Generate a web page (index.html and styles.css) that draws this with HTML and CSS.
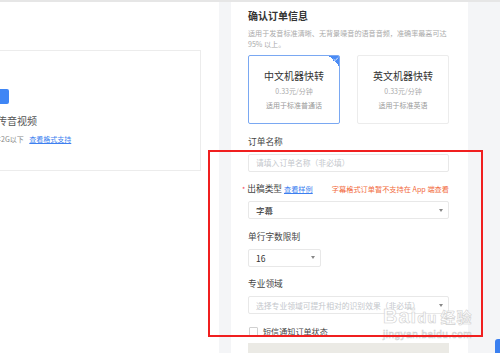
FILE: index.html
```html
<!DOCTYPE html>
<html lang="zh-CN">
<head>
    <meta charset="UTF-8">
    <meta name="viewport" content="width=device-width, initial-scale=1.0">
    <title>确认订单信息</title>
    <link rel="stylesheet" href="styles.css">
</head>
<body>
    <div class="page">
        <div class="left">
            <div class="upload-card">
                <div class="upload-btn"></div>
                <div class="upload-title">上传音视频</div>
                <div class="upload-tip">文件2G以下 <a href="#" class="link">查看格式支持</a></div>
            </div>
        </div>
        <div class="right">
            <h2 class="title">确认订单信息</h2>
            <p class="desc">适用于发音标准清晰、无背景噪音的语音音频，准确率最高可达<br>95% 以上。</p>
            <div class="cards">
                <div class="card active">
                    <span class="corner">
                        <svg viewBox="0 0 10 10" width="10" height="10"><path d="M4.6 3.2 L6.2 4.6 L9 1.6" fill="none" stroke="#fff" stroke-width="0.8"/></svg>
                    </span>
                    <div class="card-name">中文机器快转</div>
                    <div class="card-price">0.33元/分钟</div>
                    <div class="card-note">适用于标准普通话</div>
                </div>
                <div class="card">
                    <div class="card-name">英文机器快转</div>
                    <div class="card-price">0.33元/分钟</div>
                    <div class="card-note">适用于标准英语</div>
                </div>
            </div>

            <div class="field">
                <div class="label">订单名称</div>
                <div class="control"><span class="placeholder">请填入订单名称（非必填）</span></div>
            </div>
            <div class="field">
                <div class="label-row">
                    <div class="label"><span class="star">*</span>出稿类型 <a href="#" class="link">查看样例</a></div>
                    <div class="note">字幕格式订单暂不支持在 App 端查看</div>
                </div>
                <div class="control select"><span class="value">字幕</span><span class="arrow"></span></div>
            </div>
            <div class="field">
                <div class="label">单行字数限制</div>
                <div class="control select small"><span class="value">16</span><span class="arrow"></span></div>
            </div>
            <div class="field">
                <div class="label">专业领域</div>
                <div class="control select"><span class="placeholder">选择专业领域可提升相对的识别效果（非必填）</span><span class="arrow"></span></div>
            </div>
            <label class="check-row"><span class="checkbox"></span>短信通知订单状态</label>
            <div class="submit-box"></div>
        </div>
    </div>

    <div class="watermark">
        <div class="wm-logo">Bai<span class="wm-du">du</span><span class="wm-cn">经验</span></div>
        <div class="wm-url">jingyan.baidu.com</div>
    </div>
    <div class="float-tab"></div>
    <div class="highlight-box"></div>
</body>
</html>
```

FILE: styles.css
```css
* {
    margin: 0;
    padding: 0;
    box-sizing: border-box;
}

body {
    width: 500px;
    height: 353px;
    overflow: hidden;
    position: relative;
    background: #f4f5f7;
    border-top: 2px solid #e6e6e6;
    font-family: "Noto Sans CJK SC", "Noto Sans", sans-serif;
    color: #333;
}

.page {
    display: flex;
    gap: 12px;
    height: 351px;
}

a.link {
    color: #3d7ff0;
    text-decoration: underline;
}

/* left upload area */
.left {
    width: 219px;
    flex-shrink: 0;
    background: #fff;
    padding-top: 48px;
    overflow: hidden;
}

.upload-card {
    margin: 0 18px 0 -40px;
    height: 121px;
    border: 1px solid #ececec;
    padding: 38px 0 0 26px;
}

.upload-btn {
    width: 22px;
    height: 15px;
    background: #3f86f5;
    border-radius: 2px;
}

.upload-title {
    margin-top: 10px;
    font-size: 10px;
    line-height: 14px;
    color: #555;
    white-space: nowrap;
}

.upload-tip {
    margin-top: 6px;
    font-size: 7px;
    line-height: 10px;
    color: #888;
    white-space: nowrap;
}

.upload-tip .link {
    margin-left: 4px;
}

/* right order panel */
.right {
    width: 237px;
    flex-shrink: 0;
    background: #fff;
    padding: 7px 19px 0 17px;
}

.title {
    font-size: 10px;
    line-height: 14px;
    font-weight: bold;
    color: #333;
}

.desc {
    margin-top: 4.5px;
    font-size: 7.1px;
    line-height: 11px;
    color: #aaa;
    white-space: nowrap;
}

.cards {
    display: flex;
    gap: 17px;
    margin-top: 5.5px;
}

.card {
    position: relative;
    width: 92px;
    height: 69px;
    border: 1px solid #ececec;
    border-radius: 2px;
    padding-top: 13px;
    text-align: center;
    overflow: hidden;
}

.card.active {
    border-color: #7aa8f2;
}

.corner {
    position: absolute;
    top: 0;
    right: 0;
    width: 10px;
    height: 10px;
    background: linear-gradient(45deg, transparent 50%, #4a8bf5 50%);
    display: flex;
}

.card-name {
    font-size: 10px;
    line-height: 14px;
    color: #333;
}

.card-price {
    margin-top: 3px;
    font-size: 7px;
    line-height: 10px;
    color: #aaa;
}

.card-note {
    margin-top: 4px;
    font-size: 7px;
    line-height: 10px;
    color: #999;
}

.field {
    margin-top: 11.5px;
}

.label-row {
    display: flex;
    justify-content: space-between;
    align-items: center;
}

.label {
    font-size: 8.7px;
    line-height: 12px;
    color: #444;
    white-space: nowrap;
}

.label .link {
    font-size: 7.2px;
}

.star {
    color: #f5475a;
    margin-left: -6px;
    margin-right: 2px;
    font-size: 7px;
}

.note {
    font-size: 7.2px;
    line-height: 12px;
    color: #f26a3c;
    white-space: nowrap;
}

.control {
    margin-top: 6px;
    height: 18px;
    border: 1px solid #e8e8e8;
    border-radius: 2px;
    display: flex;
    align-items: center;
    padding: 0 5px 0 7px;
    font-size: 8.5px;
}

.control.small {
    width: 73px;
}

.select {
    justify-content: space-between;
}

.placeholder {
    font-size: 7.8px;
    color: #c4c7cc;
    white-space: nowrap;
}

.value {
    color: #333;
}

.arrow {
    width: 0;
    height: 0;
    border-left: 2.5px solid transparent;
    border-right: 2.5px solid transparent;
    border-top: 3px solid #888;
}

.check-row {
    margin-top: 11.5px;
    display: flex;
    align-items: center;
    gap: 5px;
    height: 12px;
    font-size: 8.1px;
    color: #444;
    padding-left: 1px;
}

.checkbox {
    width: 9px;
    height: 9px;
    border: 1px solid #d0d0d0;
    border-radius: 1px;
    background: #fff;
}

.submit-box {
    margin-top: 5.5px;
    height: 20px;
    background: #ebeae5;
}

/* overlays */
.watermark {
    position: absolute;
    left: 383px;
    top: 303px;
    color: rgba(255, 255, 255, 0.85);
    -webkit-text-stroke: 0.6px #d0d0d0;
    font-family: "Liberation Sans", sans-serif;
    pointer-events: none;
}

.wm-logo {
    font-size: 20px;
    line-height: 22px;
    font-weight: bold;
    letter-spacing: 1px;
    white-space: nowrap;
}

.wm-du {
    font-size: 15px;
}

.wm-cn {
    margin-left: 3px;
    font-size: 15px;
    font-family: "Noto Sans CJK SC", sans-serif;
}

.wm-url {
    font-size: 10px;
    line-height: 12px;
    letter-spacing: 0.5px;
}

.float-tab {
    position: absolute;
    left: 495px;
    top: 337px;
    width: 8px;
    height: 20px;
    background: #3b80f0;
    border-radius: 3px 0 0 0;
}

.highlight-box {
    position: absolute;
    left: 208px;
    top: 148px;
    width: 275px;
    height: 187px;
    border: 2px solid #f01f1f;
}
```
